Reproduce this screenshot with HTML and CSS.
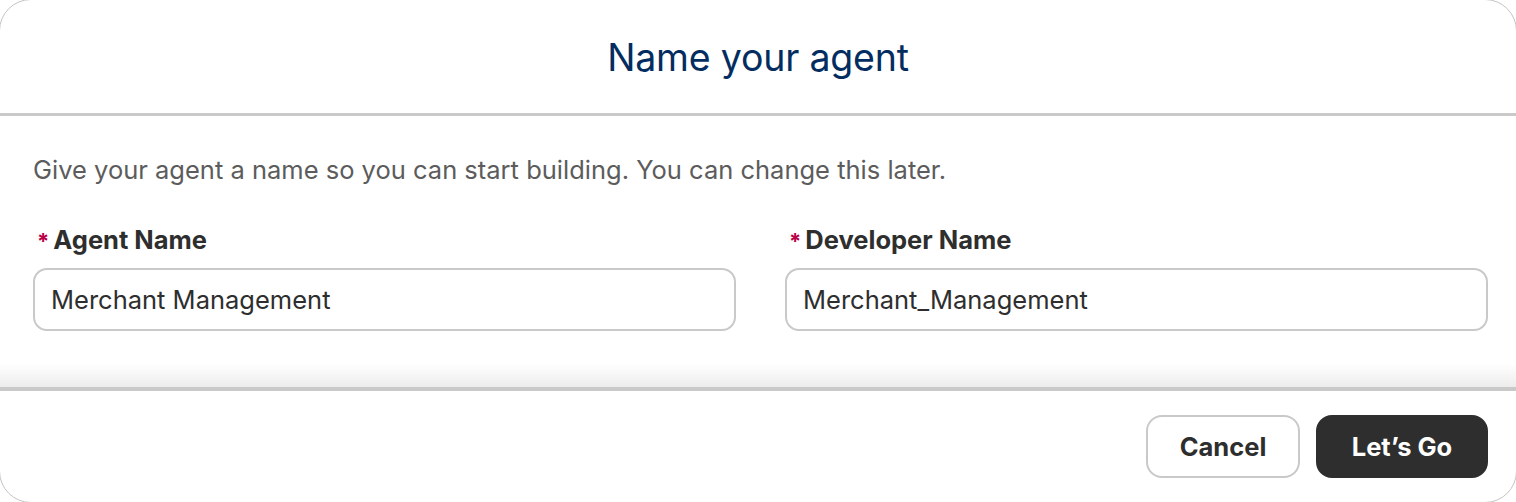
FILE: index.html
```html
<!DOCTYPE html>
<html lang="en">
<head>
<meta charset="utf-8">
<title>Name your agent</title>
<link rel="stylesheet" href="styles.css">
</head>
<body>
<div class="modal">
  <header class="modal-header">
    <h1 class="title">Name your agent</h1>
  </header>
  <section class="modal-body">
    <p class="description">Give your agent a name so you can start building. You can change this later.</p>
    <div class="fields">
      <div class="field">
        <label class="label"><abbr class="required">*</abbr>Agent Name</label>
        <div class="input">Merchant Management</div>
      </div>
      <div class="field">
        <label class="label"><abbr class="required">*</abbr>Developer Name</label>
        <div class="input">Merchant_Management</div>
      </div>
    </div>
  </section>
  <footer class="modal-footer">
    <button class="btn btn-neutral">Cancel</button>
    <button class="btn btn-brand">Let’s Go</button>
  </footer>
</div>
</body>
</html>
```

FILE: styles.css
```css
html, body {
  margin: 0;
  padding: 0;
  background: #ffffff;
  overflow: hidden;
}

body {
  font-family: Inter, "Noto Sans", "Liberation Sans", sans-serif;
  color: #2e2e2e;
}

.modal {
  margin: -1px;
  width: 1518px;
  height: 504px;
  box-sizing: border-box;
  border: 1px solid #c4c4c4;
  border-radius: 32px;
  background: #ffffff;
  display: flex;
  flex-direction: column;
  overflow: hidden;
}

.modal-header {
  height: 113px;
  flex: none;
  display: flex;
  align-items: center;
  justify-content: center;
  border-bottom: 3px solid #c9c9c9;
}

.title {
  margin: 0;
  padding-top: 2px;
  font-size: 37.5px;
  font-weight: 400;
  color: #032d60;
  letter-spacing: -0.2px;
}

.modal-body {
  height: 271px;
  flex: none;
  box-sizing: border-box;
  padding: 34px 28px 0 33px;
  background: linear-gradient(to bottom, #ffffff 0, #ffffff 248px, #ececec 271px);
}

.description {
  margin: 0;
  font-size: 25.5px;
  line-height: 39px;
  color: #5c5c5c;
}

.fields {
  margin-top: 33px;
  display: grid;
  grid-template-columns: 1fr 1fr;
  column-gap: 49px;
}

.field {
  display: flex;
  flex-direction: column;
  gap: 9px;
}

.label {
  display: flex;
  align-items: baseline;
  font-size: 25.5px;
  line-height: 36px;
  font-weight: 700;
  color: #2e2e2e;
}

.required {
  text-decoration: none;
  color: #ba0048;
  font-size: 22px;
  margin: 0 4px 0 4px;
}

.input {
  height: 63px;
  box-sizing: border-box;
  border: 2px solid #c9c9c9;
  border-radius: 14px;
  padding: 0 16px;
  display: flex;
  align-items: center;
  font-size: 25.5px;
  color: #2e2e2e;
}

.modal-footer {
  flex: 1;
  border-top: 4px solid #c9c9c9;
  display: flex;
  justify-content: flex-end;
  align-items: flex-start;
  gap: 16px;
  padding: 24px 28px 0 0;
}

.btn {
  height: 63px;
  box-sizing: border-box;
  border-radius: 16px;
  font-family: inherit;
  font-size: 25.5px;
  font-weight: 700;
  cursor: pointer;
}

.btn-neutral {
  width: 154px;
  background: #ffffff;
  border: 2px solid #c9c9c9;
  color: #2e2e2e;
}

.btn-brand {
  width: 172px;
  background: #2e2e2e;
  border: 2px solid #2e2e2e;
  color: #ffffff;
}
```
